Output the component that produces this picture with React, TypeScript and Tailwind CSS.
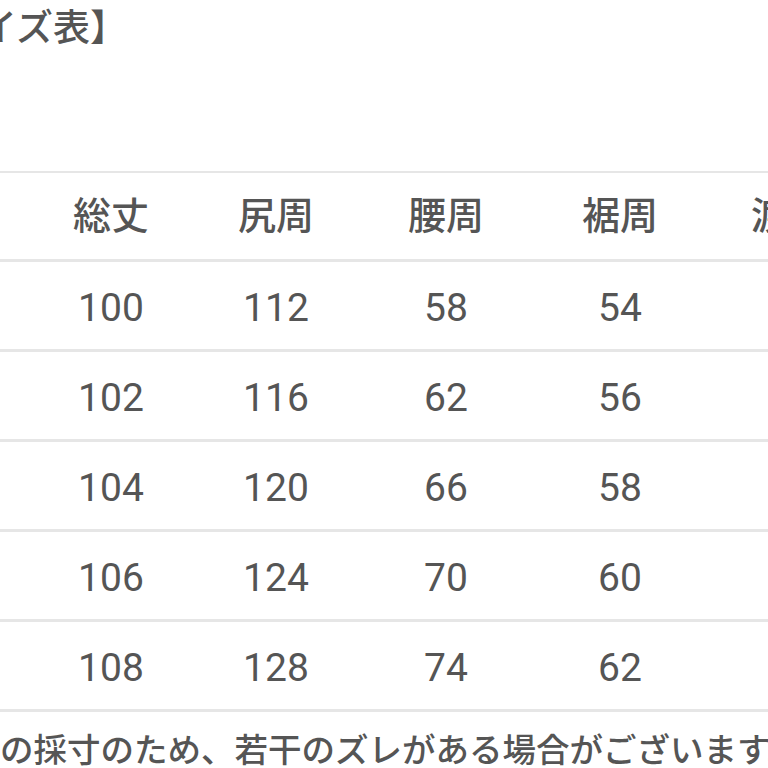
import React from "react";

const widths = [170, 170, 160, 180, 168, 170];
const header = ["サイズ", "総丈", "尻周", "腰周", "裾周", "渡り"];
const rows = [
  ["S", "100", "112", "58", "54", "30"],
  ["M", "102", "116", "62", "56", "31"],
  ["L", "104", "120", "66", "58", "32"],
  ["XL", "106", "124", "70", "60", "33"],
  ["XXL", "108", "128", "74", "62", "34"],
];

function Cells({ cells }: { cells: string[] }) {
  return (
    <div className="flex h-full items-center ml-[-144px]">
      {cells.map((c, i) => (
        <div
          key={i}
          className="shrink-0 text-center whitespace-nowrap"
          style={{ width: widths[i] }}
        >
          {c}
        </div>
      ))}
    </div>
  );
}

export default function App() {
  return (
    <div
      className="w-[768px] h-[768px] overflow-hidden bg-white text-[#555555] font-medium"
      style={{ fontFamily: "Roboto, 'Noto Sans CJK JP', sans-serif" }}
    >
      <div className="h-[58px] leading-[58px] text-[37px] ml-[-94px] whitespace-nowrap">
        【サイズ表】
      </div>
      <div className="mt-[113px] text-[38px]">
        <div className="h-[91px] border-t-2 border-b-[3px] border-[#e6e6e6]">
          <Cells cells={header} />
        </div>
        {rows.map((r, i) => (
          <div key={i} className="h-[90px] pt-[5px] border-b-[3px] border-[#e6e6e6] font-normal text-[39px]">
            <Cells cells={r} />
          </div>
        ))}
      </div>
      <div className="mt-[19px] h-[40px] leading-[40px] text-[33.5px] whitespace-nowrap">
        の採寸のため、若干のズレがある場合がございます。
      </div>
    </div>
  );
}
